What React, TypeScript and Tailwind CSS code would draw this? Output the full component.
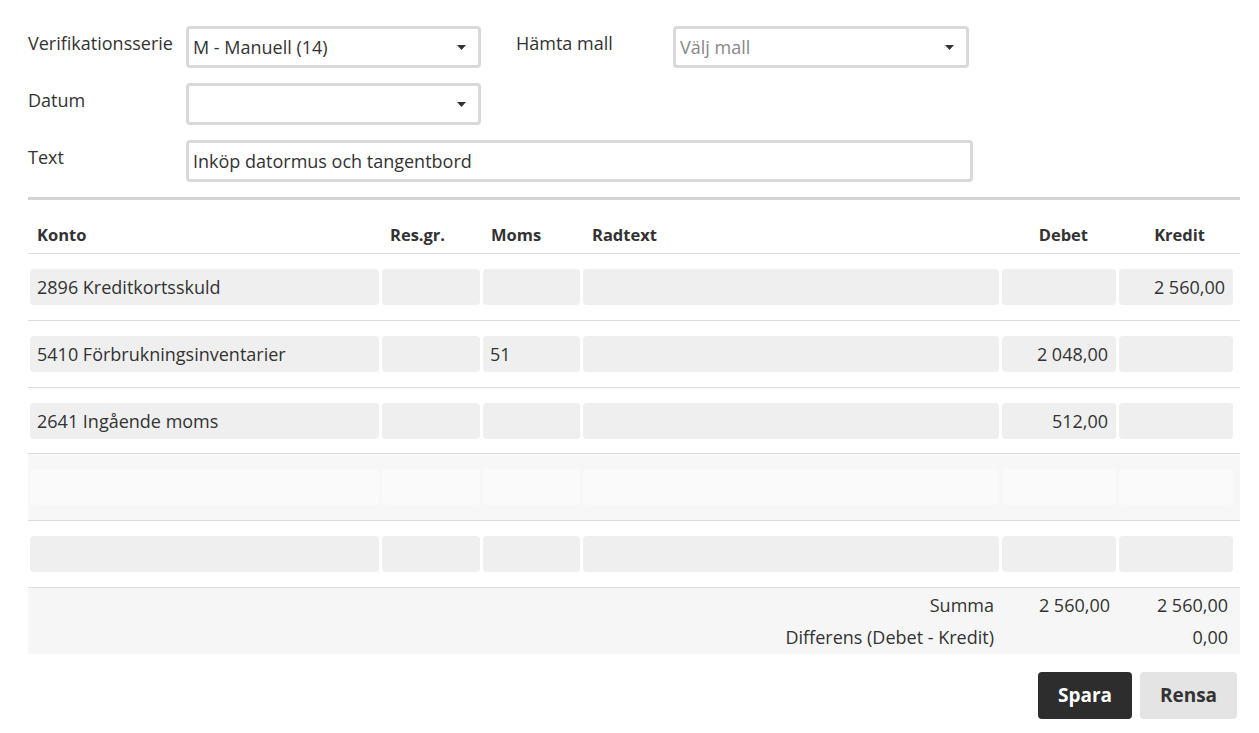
import React from "react";

type Row = {
  konto: string;
  moms?: string;
  debet?: string;
  kredit?: string;
  faded?: boolean;
};

const rows: Row[] = [
  { konto: "2896 Kreditkortsskuld", kredit: "2 560,00" },
  { konto: "5410 Förbrukningsinventarier", moms: "51", debet: "2 048,00" },
  { konto: "2641 Ingående moms", debet: "512,00" },
  { konto: "", faded: true },
  { konto: "" },
];

const cols = "grid grid-cols-[349px_98px_97px_416px_114px_114px] gap-x-[3px] pl-[2px] pr-[7px]";

function Caret() {
  return (
    <svg width="9" height="5" viewBox="0 0 9 5" className="shrink-0">
      <path d="M0 0h9L4.5 5z" fill="#333" />
    </svg>
  );
}

function SelectBox({ value, placeholder, width }: { value?: string; placeholder?: string; width: string }) {
  return (
    <div
      className={`flex h-[42px] ${width} items-center justify-between rounded-[4px] border-[3px] border-[#d9d9d9] bg-white pl-[4px] pr-[12px]`}
    >
      <span className={value ? "text-[#333]" : "text-[#888]"}>{value ?? placeholder ?? ""}</span>
      <Caret />
    </div>
  );
}

function Cell({ children, right, faded }: { children?: React.ReactNode; right?: boolean; faded?: boolean }) {
  return (
    <div
      className={`flex h-[36px] items-center rounded-[4px] ${faded ? "bg-[#fafafa]" : "bg-[#efefef]"} ${
        right ? "justify-end pr-[8px]" : "pl-[7px]"
      }`}
    >
      {children}
    </div>
  );
}

export default function App() {
  return (
    <div
      className="min-h-[733px] bg-white text-[18px] text-[#333]"
      style={{ fontFamily: '"Open Sans", "Noto Sans", sans-serif' }}
    >
      <div className="ml-[28px] w-[1212px] pt-[26px]">
        <div className="flex flex-col gap-[15px]">
          <div className="flex">
            <label className="w-[158px] pt-[4px]">Verifikationsserie</label>
            <SelectBox value="M - Manuell (14)" width="w-[295px]" />
            <label className="ml-[35px] w-[157px] pt-[4px]">Hämta mall</label>
            <SelectBox placeholder="Välj mall" width="w-[296px]" />
          </div>
          <div className="flex">
            <label className="w-[158px] pt-[4px]">Datum</label>
            <SelectBox width="w-[295px]" />
          </div>
          <div className="flex">
            <label className="w-[158px] pt-[4px]">Text</label>
            <div className="flex h-[42px] w-[787px] items-center rounded-[4px] border-[3px] border-[#d9d9d9] pl-[4px]">
              Inköp datormus och tangentbord
            </div>
          </div>
        </div>

        <div className="mt-[15px] border-t-[3px] border-[#d4d4d4]">
          <div className={`${cols} h-[54px] items-center border-b border-[#dcdcdc] pt-[18px] text-[16.5px] font-bold`}>
            <div className="pl-[7px]">Konto</div>
            <div className="pl-[8px]">Res.gr.</div>
            <div className="pl-[8px]">Moms</div>
            <div className="pl-[9px]">Radtext</div>
            <div className="pr-[28px] text-right">Debet</div>
            <div className="pr-[28px] text-right">Kredit</div>
          </div>

          {rows.map((r, i) => (
            <div
              key={i}
              className={`${cols} border-b border-[#dcdcdc] ${i === 2 ? "pt-[15px] pb-[14px]" : "py-[15px]"} ${
                r.faded ? "bg-[#f7f7f7]" : ""
              }`}
            >
              <Cell faded={r.faded}>{r.konto}</Cell>
              <Cell faded={r.faded} />
              <Cell faded={r.faded}>{r.moms}</Cell>
              <Cell faded={r.faded} />
              <Cell faded={r.faded} right>
                {r.debet}
              </Cell>
              <Cell faded={r.faded} right>
                {r.kredit}
              </Cell>
            </div>
          ))}

          <div className={`${cols} bg-[#f6f6f6] py-[1px]`}>
            <div className="col-span-4 flex h-[32px] items-center justify-end pr-[5px]">Summa</div>
            <div className="flex h-[32px] items-center justify-end pr-[6px]">2 560,00</div>
            <div className="flex h-[32px] items-center justify-end pr-[5px]">2 560,00</div>
            <div className="col-span-4 flex h-[32px] items-center justify-end pr-[5px]">
              Differens (Debet - Kredit)
            </div>
            <div className="h-[32px]" />
            <div className="flex h-[32px] items-center justify-end pr-[5px]">0,00</div>
          </div>
        </div>

        <div className="mt-[18px] flex justify-end gap-[8px] pr-[3px]">
          <button className="h-[47px] w-[94px] rounded-[4px] bg-[#2d2d2d] text-[19px] font-bold text-white">
            Spara
          </button>
          <button className="h-[47px] w-[97px] rounded-[4px] bg-[#e4e4e4] text-[19px] font-bold text-[#333]">
            Rensa
          </button>
        </div>
      </div>
    </div>
  );
}
